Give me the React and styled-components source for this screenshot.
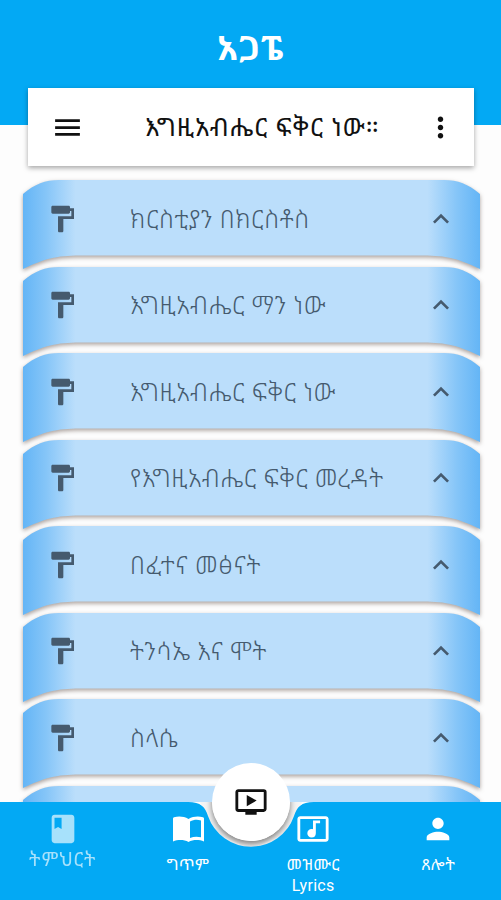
import React from 'react';

import styled, { createGlobalStyle } from 'styled-components';
import { MdMenu, MdMoreVert, MdFormatPaint, MdExpandLess, MdBook, MdMusicVideo, MdPerson, MdOndemandVideo } from 'react-icons/md';

const GlobalStyle = createGlobalStyle`
  * { box-sizing: border-box; }
  body {
    margin: 0;
    background: #fdfdfd;
    font-family: Roboto, "Noto Sans Ethiopic", "Noto Sans", sans-serif;
  }
`
const Screen = styled.div`
  width: 501px;
  height: 900px;
  display: flex;
  flex-direction: column;
  overflow: hidden;
`
const Header = styled.header`
  flex: none;
  height: 125px;
  padding: 24px 27px 0 28px;
  background: #03a9f4;
`
const Title = styled.h1`
  margin: 0;
  height: 64px;
  line-height: 48px;
  text-align: center;
  color: #fff;
  font-size: 34px;
  font-weight: 700;
  letter-spacing: 1.5px;
`
const Toolbar = styled.div`
  display: flex;
  align-items: center;
  height: 78px;
  padding: 0 17px 0 23px;
  background: #fff;
  color: #111;
  box-shadow: 0 2px 5px rgba(0, 0, 0, 0.35);
`
const ToolbarText = styled.div`
  flex: 1;
  padding-left: 61px;
  font-size: 25.5px;
  line-height: 34px;
  letter-spacing: 0.95px;
  white-space: nowrap;
`
const List = styled.main`
  flex: 1;
  min-height: 0;
  padding: 55px 21px 0 23px;
  overflow: hidden;
`
const Row = styled.div`
  position: relative;
  display: flex;
  align-items: center;
  height: 86.5px;
  padding: 0 23px 9px 23px;
  color: #455a6e;
`
const RowShape = styled.svg`
  position: absolute;
  top: 0;
  left: 0;
  z-index: -1;
  overflow: visible;
  filter: drop-shadow(0 2px 2px rgba(90, 70, 60, 0.5));
`
const RowLabel = styled.span`
  flex: 1;
  padding: 2px 0 0 52px;
  font-size: 24.5px;
  font-weight: 350;
  line-height: 34px;
  letter-spacing: 0.65px;
  white-space: nowrap;
`
const Nav = styled.nav`
  position: relative;
  flex: none;
  display: flex;
  height: 98px;
  color: #fff;
`
const NavShape = styled.svg`
  position: absolute;
  top: 0;
  left: 0;
  z-index: -1;
`
const NavItem = styled.div`
  flex: 1;
  display: flex;
  flex-direction: column;
  align-items: center;
  padding-top: 10px;
  opacity: ${p => p.$active ? 0.65 : 1};
`
const NavLabel = styled.span`
  margin-top: ${p => p.$active ? 3 : 8}px;
  font-size: ${p => p.$active ? 19 : 16}px;
  line-height: 21px;
  letter-spacing: ${p => p.$active ? 0.8 : 0.3}px;
  text-align: center;
  white-space: pre-line;
`
const Fab = styled.button`
  position: absolute;
  top: -39px;
  left: 212px;
  width: 78px;
  height: 78px;
  display: flex;
  align-items: center;
  justify-content: center;
  padding: 0;
  border: 0;
  border-radius: 50%;
  background: #fff;
  color: #111;
`
const FabShadow = styled.circle`
  filter: drop-shadow(0 3px 3px rgba(0, 0, 0, 0.5));
`

const topics = [
  'ክርስቲያን በክርስቶስ',
  'እግዚአብሔር ማን ነው',
  'እግዚአብሔር ፍቅር ነው',
  'የእግዚአብሔር ፍቅር መረዳት',
  'በፈተና መፅናት',
  'ትንሳኤ እና ሞት',
  'ስላሴ',
  '',
]

const OpenBook = () => (
  <svg width="34" height="34" viewBox="0 0 34 34">
    <path fill="currentColor" fillRule="evenodd" d="M2 6.500Q2 5.500 3 5.300C8 4 13 4.500 17.500 7C22 4.500 27 4 32 5.300Q33 5.500 33 6.500V29.500C28 27.500 22 27.500 17.500 30C13 27.500 7 27.500 2 29.500ZM19 9.500V26C22.500 24.500 26 24.300 30 25.200V8.500C26 7.200 22.500 7.700 19 9.500Z" />
  </svg>
)

const navItems = [
  { label: 'ትምህርት', icon: <MdBook size={34} />, active: true },
  { label: 'ግጥም', icon: <OpenBook /> },
  { label: 'መዝሙር\nLyrics', icon: <MdMusicVideo size={34} /> },
  { label: 'ጸሎት', icon: <MdPerson size={34} /> },
]

const Topic = ({ label }) => (
  <Row>
    <RowShape width="457" height="90">
      <defs>
        <linearGradient id="rowFill">
          <stop offset="0" stopColor="#64b5f6" />
          <stop offset="0.05" stopColor="#85c5f8" />
          <stop offset="0.115" stopColor="#bbdefb" />
          <stop offset="0.885" stopColor="#bbdefb" />
          <stop offset="0.95" stopColor="#85c5f8" />
          <stop offset="1" stopColor="#64b5f6" />
        </linearGradient>
      </defs>
      <path fill="url(#rowFill)" d="M0 14C12 4 22 0 36 0H421C435 0 445 4 457 14V89C436 79 424 75.500 400 75.500H57C33 75.500 21 79 0 89Z" />
    </RowShape>
    {label && <>
      <MdFormatPaint size={32} />
      <RowLabel>{label}</RowLabel>
      <MdExpandLess size={32} />
    </>}
  </Row>
)

const App = () => (
  <Screen>
    <GlobalStyle />
    <Header>
      <Title>አጋፔ</Title>
      <Toolbar>
        <MdMenu size={33} />
        <ToolbarText>እግዚአብሔር ፍቅር ነው።</ToolbarText>
        <MdMoreVert size={33} />
      </Toolbar>
    </Header>
    <List>
      {topics.map((label, i) => <Topic key={i} label={label} />)}
    </List>
    <Nav>
      <NavShape width="501" height="98">
        <path fill="#f4f4f4" d="M200 0H302L285 32L251 47L217 32Z" />
        <FabShadow cx="251" cy="0" r="39" fill="#fff" />
        <path fill="#03a9f4" d="M0 0H188C201 0 205 5 208 14A45.500 45.500 0 0 0 294 14C297 5 301 0 314 0H501V98H0Z" />
      </NavShape>
      {navItems.map(({ label, icon, active }) => (
        <NavItem key={label} $active={active}>
          {icon}
          <NavLabel $active={active}>{label}</NavLabel>
        </NavItem>
      ))}
      <Fab><MdOndemandVideo size={34} /></Fab>
    </Nav>
  </Screen>
)

export default App;
